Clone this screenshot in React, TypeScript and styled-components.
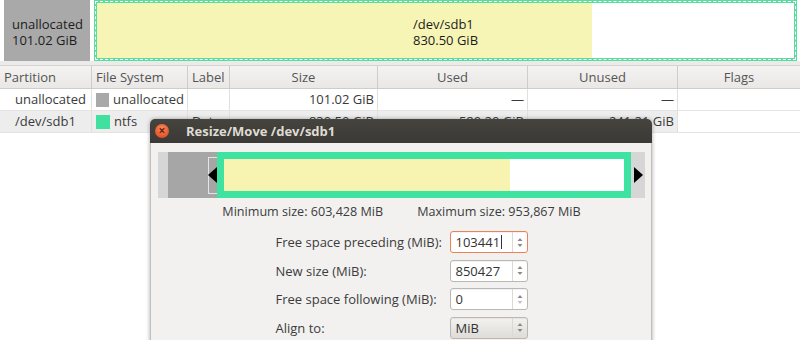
import styled, { createGlobalStyle, css } from 'styled-components';

const GlobalStyle = createGlobalStyle`
  html, body {
    margin: 0;
    padding: 0;
    background: #ffffff;
  }
  body {
    font-family: "Open Sans", "DejaVu Sans", sans-serif;
    font-size: 13px;
    color: #3c3c3c;
  }
`;

const columns = '92px 96px 42px 148px 150px 150px 1fr';

type Align = 'left' | 'right' | 'center';

const rows = [
  {
    partition: 'unallocated',
    fs: 'unallocated',
    swatch: '#a9a9a9',
    label: '',
    size: '101.02 GiB',
    used: '—',
    unused: '—',
    selected: false,
  },
  {
    partition: '/dev/sdb1',
    fs: 'ntfs',
    swatch: '#3fe0a0',
    label: 'Data',
    size: '830.50 GiB',
    used: '589.29 GiB',
    unused: '241.21 GiB',
    selected: true,
  },
];

const fields = [
  { label: 'Free space preceding (MiB):', value: '103441', focused: true },
  { label: 'New size (MiB):', value: '850427', focused: false },
  { label: 'Free space following (MiB):', value: '0', focused: false },
];

const SpinArrows = ({ dim }: { dim?: boolean }) => (
  <svg width="6" height="11" viewBox="0 0 6 11">
    <path d="M3 1 L5.5 4 L0.5 4 Z" fill="#8a8a8a" />
    <path d="M3 10 L5.5 7 L0.5 7 Z" fill={dim ? '#c4c4c4' : '#8a8a8a'} />
  </svg>
);

const App = () => {
  return (
    <Page>
      <GlobalStyle />
      <DiskMap>
        <UnallocBlock>
          <span>unallocated</span>
          <span>101.02 GiB</span>
        </UnallocBlock>
        <PartBlock>
          <PartText>
            <span>/dev/sdb1</span>
            <span>830.50 GiB</span>
          </PartText>
        </PartBlock>
      </DiskMap>
      <Band />
      <Table>
        <HeaderCell>Partition</HeaderCell>
        <HeaderCell>File System</HeaderCell>
        <HeaderCell>Label</HeaderCell>
        <HeaderCell $align="center">Size</HeaderCell>
        <HeaderCell $align="center">Used</HeaderCell>
        <HeaderCell $align="center">Unused</HeaderCell>
        <HeaderCell $align="center" $last>Flags</HeaderCell>
        {rows.map((r) => (
          <Row key={r.partition} $selected={r.selected}>
            <Cell $indent>{r.partition}</Cell>
            <Cell>
              <Swatch $color={r.swatch} />
              {r.fs}
            </Cell>
            <Cell>{r.label}</Cell>
            <Cell $align="right">{r.size}</Cell>
            <Cell $align="right">{r.used}</Cell>
            <Cell $align="right">{r.unused}</Cell>
            <Cell $last $flags />
          </Row>
        ))}
      </Table>

      <Dialog>
        <TitleBar>
          <CloseButton>×</CloseButton>
          <Title>Resize/Move /dev/sdb1</Title>
        </TitleBar>
        <DialogBody>
          <Graphic>
            <GraphicPad />
            <FreeBefore>
              <HandleBox />
              <Arrow $dir="left" />
            </FreeBefore>
            <PartFrame>
              <UsedFill />
            </PartFrame>
            <GraphicPad $right>
              <Arrow $dir="right" />
            </GraphicPad>
          </Graphic>
          <Limits>
            <span>Minimum size: 603,428 MiB</span>
            <span>Maximum size: 953,867 MiB</span>
          </Limits>
          <Form>
            {fields.map((f) => (
              <FormRow key={f.label}>
                <FieldLabel>{f.label}</FieldLabel>
                <SpinBox $focused={f.focused}>
                  <SpinText>
                    {f.value}
                    {f.focused && <Caret />}
                  </SpinText>
                  <SpinButton>
                    <SpinArrows dim={f.value === '0'} />
                  </SpinButton>
                </SpinBox>
              </FormRow>
            ))}
            <FormRow>
              <FieldLabel>Align to:</FieldLabel>
              <Combo>
                <SpinText>MiB</SpinText>
                <SpinButton>
                  <SpinArrows />
                </SpinButton>
              </Combo>
            </FormRow>
          </Form>
        </DialogBody>
      </Dialog>
    </Page>
  );
};

const Page = styled.div`
  position: relative;
  width: 800px;
  height: 340px;
  overflow: hidden;
  background: #ffffff;
`;

const DiskMap = styled.div`
  display: flex;
  gap: 4px;
  height: 61px;
  padding: 0 3px 0 4px;
  background: #ffffff;
`;

const UnallocBlock = styled.div`
  width: 86px;
  background: #a9a9a9;
  color: #1c1c1c;
  display: flex;
  flex-direction: column;
  justify-content: center;
  padding-left: 8px;
  line-height: 16px;
  box-sizing: border-box;
  padding-top: 2px;
  white-space: nowrap;
`;

const PartBlock = styled.div`
  flex: 1;
  position: relative;
  border: 3px solid #58dc9f;
  background: linear-gradient(to right, #f7f5b6 71%, #ffffff 71%);
  background-clip: padding-box;
  display: flex;
  align-items: center;
  justify-content: center;
  color: #1c1c1c;
  padding-top: 2px;
  box-sizing: border-box;

  &::after {
    content: '';
    position: absolute;
    inset: -2px;
    border: 1px dashed #ffffff;
    pointer-events: none;
  }
`;

const PartText = styled.div`
  display: flex;
  flex-direction: column;
  line-height: 16px;
  white-space: nowrap;
`;

const Band = styled.div`
  height: 4px;
  background: #ecebe9;
`;

const Table = styled.div`
  display: grid;
  grid-template-columns: ${columns};
  border-top: 1px solid #d6d4d0;
`;

const HeaderCell = styled.div<{ $align?: Align; $last?: boolean }>`
  height: 22px;
  line-height: 22px;
  padding: 0 4px;
  background: linear-gradient(#f4f3f2, #e9e8e6);
  color: #545454;
  text-align: ${(p) => p.$align ?? 'left'};
  border-right: ${(p) => (p.$last ? 'none' : '1px solid #cfcdc9')};
  border-bottom: 1px solid #cfcdc9;
  white-space: nowrap;
`;

const Row = styled.div<{ $selected?: boolean }>`
  display: contents;
  & > div {
    background: ${(p) => (p.$selected ? '#ededed' : '#ffffff')};
  }
`;

const Cell = styled.div<{ $align?: Align; $indent?: boolean; $last?: boolean; $flags?: boolean }>`
  height: 21px;
  line-height: 21px;
  display: flex;
  align-items: center;
  justify-content: ${(p) => (p.$align === 'right' ? 'flex-end' : 'flex-start')};
  padding: 0 3px 0 ${(p) => (p.$indent ? '15px' : '4px')};
  border-right: ${(p) => (p.$last ? 'none' : '1px solid #e2e0dd')};
  border-bottom: 1px solid #e6e4e1;
  color: #3a3a3a;
  white-space: nowrap;
  overflow: hidden;
  ${(p) =>
    p.$flags &&
    css`
      background: #ffffff !important;
    `}
`;

const Swatch = styled.span<{ $color: string }>`
  display: inline-block;
  width: 14px;
  height: 14px;
  margin-right: 4px;
  background: ${(p) => p.$color};
`;

const Dialog = styled.div`
  position: absolute;
  left: 150px;
  top: 119px;
  width: 502px;
  height: 240px;
  display: flex;
  flex-direction: column;
  border-radius: 5px 5px 0 0;
  box-shadow: 0 0 4px rgba(0, 0, 0, 0.35);
  overflow: hidden;
`;

const TitleBar = styled.div`
  height: 24px;
  background: linear-gradient(#45443f, #3a3935);
  display: flex;
  align-items: center;
  padding-left: 5px;
  gap: 17px;
`;

const CloseButton = styled.div`
  width: 14px;
  height: 14px;
  border-radius: 50%;
  background: radial-gradient(circle at 50% 35%, #f98a5f, #e2562a 70%, #c4431d);
  color: #6a2410;
  font-size: 12px;
  font-weight: bold;
  line-height: 14px;
  text-align: center;
`;

const Title = styled.div`
  color: #dfdbd2;
  font-weight: bold;
  font-size: 13px;
`;

const DialogBody = styled.div`
  flex: 1;
  background: #f2f1f0;
  border-left: 1px solid #c2bfb9;
  border-right: 1px solid #c2bfb9;
  padding: 9px 6px 0 7px;
  display: flex;
  flex-direction: column;
`;

const Graphic = styled.div`
  display: flex;
  height: 46px;
  background: #d6d6d6;
`;

const GraphicPad = styled.div<{ $right?: boolean }>`
  width: ${(p) => (p.$right ? '14px' : '10px')};
  background: #d6d6d6;
  position: relative;
`;

const FreeBefore = styled.div`
  width: 49px;
  background: #a6a6a6;
  position: relative;
`;

const HandleBox = styled.div`
  position: absolute;
  right: 0;
  top: 5px;
  bottom: 4px;
  width: 8px;
  border: 1px solid #e4e4e4;
  border-right: none;
`;

const Arrow = styled.div<{ $dir: 'left' | 'right' }>`
  position: absolute;
  top: 15px;
  width: 0;
  height: 0;
  border-top: 8px solid transparent;
  border-bottom: 8px solid transparent;
  ${(p) =>
    p.$dir === 'left'
      ? css`
          right: 0;
          border-right: 9px solid #000;
        `
      : css`
          left: 3px;
          border-left: 9px solid #000;
        `}
`;

const PartFrame = styled.div`
  flex: 1;
  border: 7px solid #3fe3a1;
  background: #ffffff;
  display: flex;
`;

const UsedFill = styled.div`
  width: 286px;
  background: #f6f4b0;
`;

const Limits = styled.div`
  display: flex;
  justify-content: center;
  gap: 34px;
  margin-top: 6px;
  height: 16px;
  line-height: 16px;
  font-size: 12.6px;
  color: #3c3c3c;
`;

const Form = styled.div`
  display: flex;
  flex-direction: column;
  align-items: center;
  gap: 6.5px;
  margin-top: 11px;
`;

const FormRow = styled.div`
  display: grid;
  grid-template-columns: 174px 78px;
  align-items: center;
  height: 22px;
`;

const FieldLabel = styled.div`
  color: #3c3c3c;
  white-space: nowrap;
`;

const SpinBox = styled.div<{ $focused?: boolean }>`
  display: flex;
  height: 22px;
  box-sizing: border-box;
  border: 1px solid ${(p) => (p.$focused ? '#e9825a' : '#bcb8b1')};
  border-radius: 3px;
  background: #ffffff;
  box-shadow: inset 0 1px 1px rgba(0, 0, 0, 0.06);
`;

const Combo = styled(SpinBox)`
  background: linear-gradient(#f3f2f0, #dedcd8);
`;

const SpinText = styled.div`
  flex: 1;
  display: flex;
  align-items: center;
  padding-left: 5px;
  color: #333;
`;

const Caret = styled.span`
  display: inline-block;
  width: 1px;
  height: 14px;
  margin-left: 1px;
  background: #333;
`;

const SpinButton = styled.div`
  width: 14px;
  display: flex;
  align-items: center;
  justify-content: center;
  border-left: 1px solid #dcd9d4;
`;

export default App;
